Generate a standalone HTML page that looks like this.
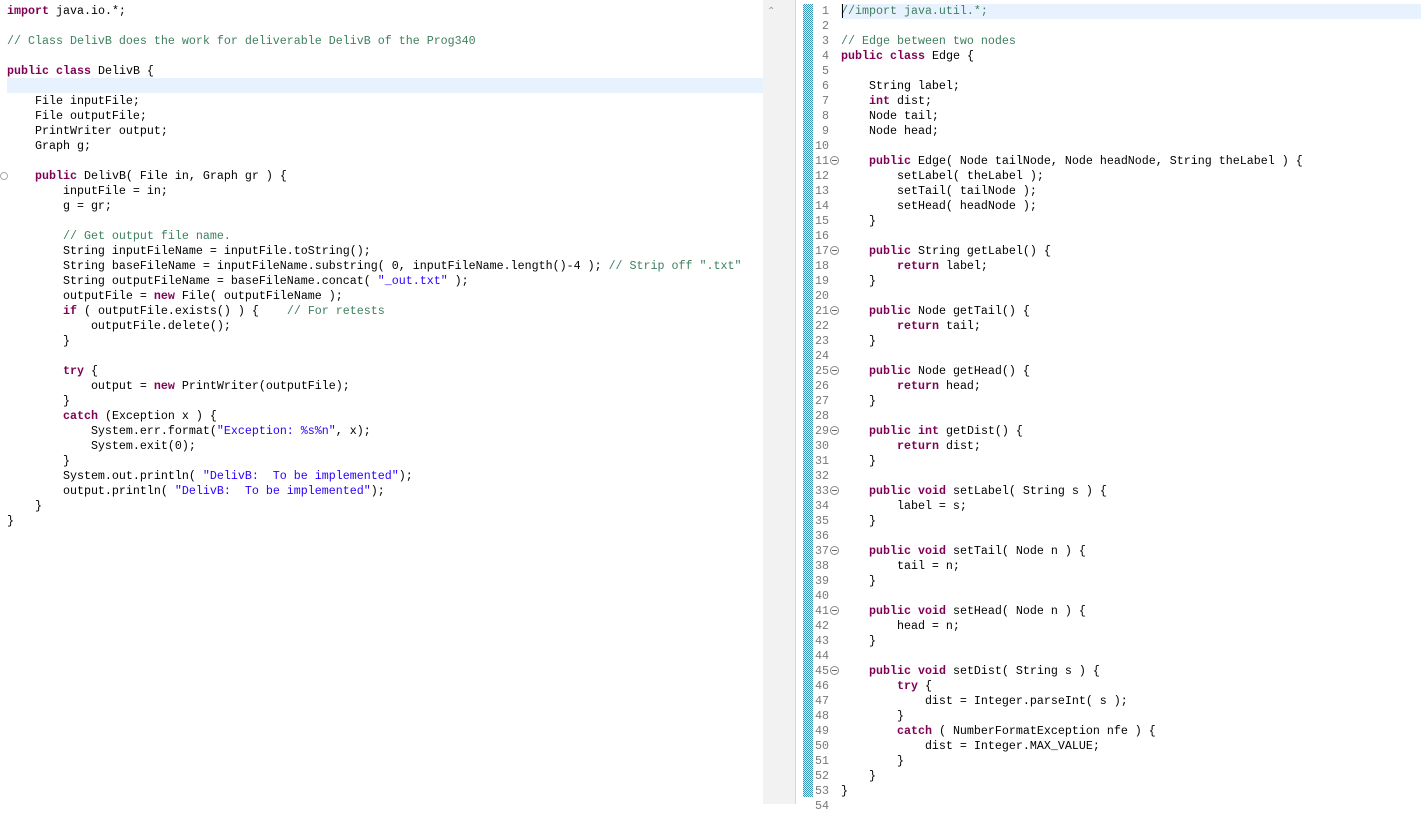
<!DOCTYPE html>
<html><head><meta charset="utf-8"><style>
body{margin:0;width:1421px;height:804px;background:#fff;overflow:hidden;position:relative;font-family:"Liberation Mono",monospace;font-size:11.67px;color:#000}
pre{margin:0;font:inherit;line-height:15px;white-space:pre}
.k{color:#7f0055;font-weight:bold}
.c{color:#3f7f5f}
.s{color:#2a00ff}
#left{position:absolute;left:7px;top:4px}
#hl1{position:absolute;left:7px;top:78px;width:756px;height:15px;background:#e8f2fe}
#sb{position:absolute;left:763px;top:0;width:32px;height:804px;background:#f2f2f2;border-right:1px solid #d8d8d8}
#hl2{position:absolute;left:841px;top:4px;width:580px;height:15px;background:#e8f2fe}
#hatch{position:absolute;left:803px;top:4px;width:10px;height:793px;background:repeating-conic-gradient(#3a97b8 0 25%,#d6ecf3 0 50%) 0 0/2px 2px}
#nums{position:absolute;left:813px;top:4px;width:16px;text-align:right;color:#787878}
#right{position:absolute;left:841px;top:4px}
.f{position:absolute;left:830px;width:7px;height:7px;border:1px solid #888;border-radius:50%;font-size:0}
.f::after{content:"";position:absolute;left:1px;top:3px;width:5px;height:1px;background:#666}
#cur{position:absolute;left:842px;top:4px;width:1px;height:14px;background:#000}
</style></head><body>
<div id="hl1"></div>
<div id="sb"><div style="position:absolute;left:4px;top:6px;color:#999;font-family:'DejaVu Sans';font-size:10px">&#8963;</div></div>
<div style="position:absolute;left:0;top:172px;width:6px;height:6px;border:1px solid #aaa;border-radius:50%"></div>
<pre id="left"><span class="k">import</span> java.io.*;

<span class="c">// Class DelivB does the work for deliverable DelivB of the Prog340</span>

<span class="k">public</span> <span class="k">class</span> DelivB {

    File inputFile;
    File outputFile;
    PrintWriter output;
    Graph g;

    <span class="k">public</span> DelivB( File in, Graph gr ) {
        inputFile = in;
        g = gr;

        <span class="c">// Get output file name.</span>
        String inputFileName = inputFile.toString();
        String baseFileName = inputFileName.substring( 0, inputFileName.length()-4 ); <span class="c">// Strip off ".txt"</span>
        String outputFileName = baseFileName.concat( <span class="s">"_out.txt"</span> );
        outputFile = <span class="k">new</span> File( outputFileName );
        <span class="k">if</span> ( outputFile.exists() ) {    <span class="c">// For retests</span>
            outputFile.delete();
        }

        <span class="k">try</span> {
            output = <span class="k">new</span> PrintWriter(outputFile);
        }
        <span class="k">catch</span> (Exception x ) {
            System.err.format(<span class="s">"Exception: %s%n"</span>, x);
            System.exit(0);
        }
        System.out.println( <span class="s">"DelivB:  To be implemented"</span>);
        output.println( <span class="s">"DelivB:  To be implemented"</span>);
    }
}</pre>
<div id="hl2"></div>
<div id="hatch"></div>
<pre id="nums"> 1
 2
 3
 4
 5
 6
 7
 8
 9
10
11
12
13
14
15
16
17
18
19
20
21
22
23
24
25
26
27
28
29
30
31
32
33
34
35
36
37
38
39
40
41
42
43
44
45
46
47
48
49
50
51
52
53
54</pre>
<div class="f" style="top:156px"></div>
<div class="f" style="top:246px"></div>
<div class="f" style="top:306px"></div>
<div class="f" style="top:366px"></div>
<div class="f" style="top:426px"></div>
<div class="f" style="top:486px"></div>
<div class="f" style="top:546px"></div>
<div class="f" style="top:606px"></div>
<div class="f" style="top:666px"></div>
<pre id="right"><span class="c">//import java.util.*;</span>

<span class="c">// Edge between two nodes</span>
<span class="k">public</span> <span class="k">class</span> Edge {

    String label;
    <span class="k">int</span> dist;
    Node tail;
    Node head;

    <span class="k">public</span> Edge( Node tailNode, Node headNode, String theLabel ) {
        setLabel( theLabel );
        setTail( tailNode );
        setHead( headNode );
    }

    <span class="k">public</span> String getLabel() {
        <span class="k">return</span> label;
    }

    <span class="k">public</span> Node getTail() {
        <span class="k">return</span> tail;
    }

    <span class="k">public</span> Node getHead() {
        <span class="k">return</span> head;
    }

    <span class="k">public</span> <span class="k">int</span> getDist() {
        <span class="k">return</span> dist;
    }

    <span class="k">public</span> <span class="k">void</span> setLabel( String s ) {
        label = s;
    }

    <span class="k">public</span> <span class="k">void</span> setTail( Node n ) {
        tail = n;
    }

    <span class="k">public</span> <span class="k">void</span> setHead( Node n ) {
        head = n;
    }

    <span class="k">public</span> <span class="k">void</span> setDist( String s ) {
        <span class="k">try</span> {
            dist = Integer.parseInt( s );
        }
        <span class="k">catch</span> ( NumberFormatException nfe ) {
            dist = Integer.MAX_VALUE;
        }
    }
}</pre>
<div id="cur"></div>
</body></html>
